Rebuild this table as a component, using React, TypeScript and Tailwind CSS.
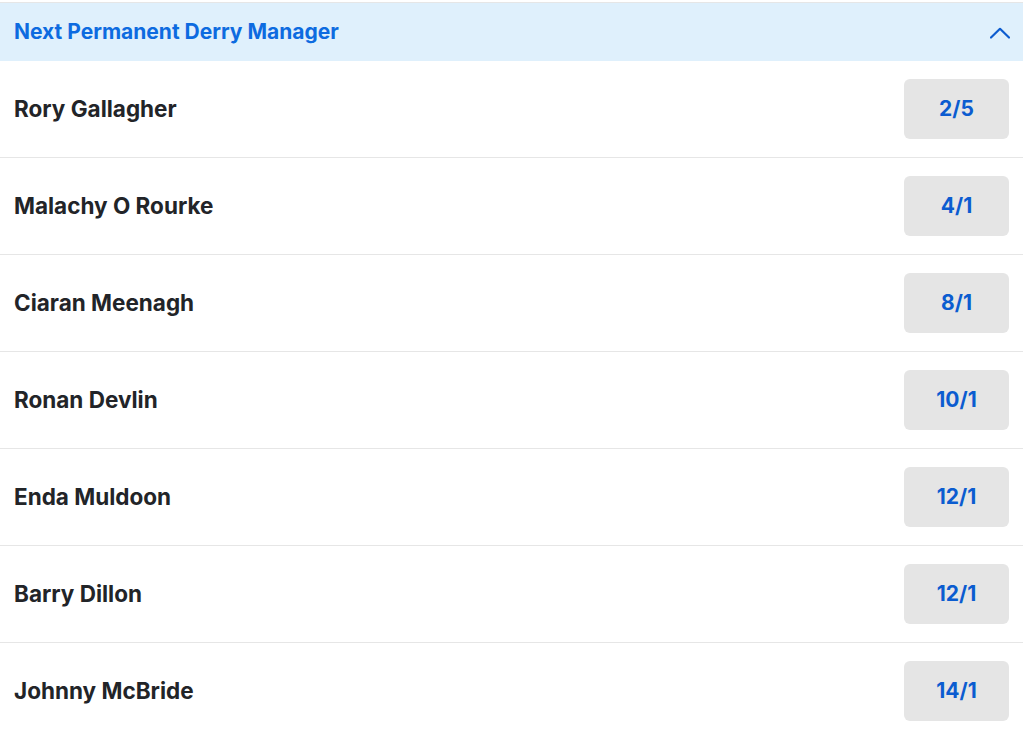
const runners = [
  { name: 'Rory Gallagher', odds: '2/5' },
  { name: 'Malachy O Rourke', odds: '4/1' },
  { name: 'Ciaran Meenagh', odds: '8/1' },
  { name: 'Ronan Devlin', odds: '10/1' },
  { name: 'Enda Muldoon', odds: '12/1' },
  { name: 'Barry Dillon', odds: '12/1' },
  { name: 'Johnny McBride', odds: '14/1' },
];

export default function App() {
  return (
    <div className="min-h-screen bg-white pt-[2px] font-['Inter',sans-serif]">
      <div className="border-t border-[#e6e6e6]">
        {/* Market header */}
        <div className="h-[58px] bg-[#dff0fc] flex items-center justify-between pl-[14px] pr-[13px]">
          <h2 className="text-[21px] font-bold text-[#0d6be0]">Next Permanent Derry Manager</h2>
          <svg width="20" height="12" viewBox="0 0 20 12" fill="none" className="mt-[1px]">
            <path d="M1 10.5 L10 1.8 L19 10.5" stroke="#0d5ccf" strokeWidth="2.2" strokeLinecap="round" strokeLinejoin="round" />
          </svg>
        </div>

        {/* Runners */}
        {runners.map((r) => (
          <div
            key={r.name}
            className="h-[97px] border-b border-[#e6e6e6] flex items-center justify-between pl-[14px] pr-[14px]"
          >
            <span className="text-[22.5px] font-bold text-[#222428]">{r.name}</span>
            <button className="w-[105px] h-[60px] rounded-md bg-[#e5e5e5] text-[21px] font-bold text-[#0b5cd0]">
              {r.odds}
            </button>
          </div>
        ))}
      </div>
    </div>
  );
}
